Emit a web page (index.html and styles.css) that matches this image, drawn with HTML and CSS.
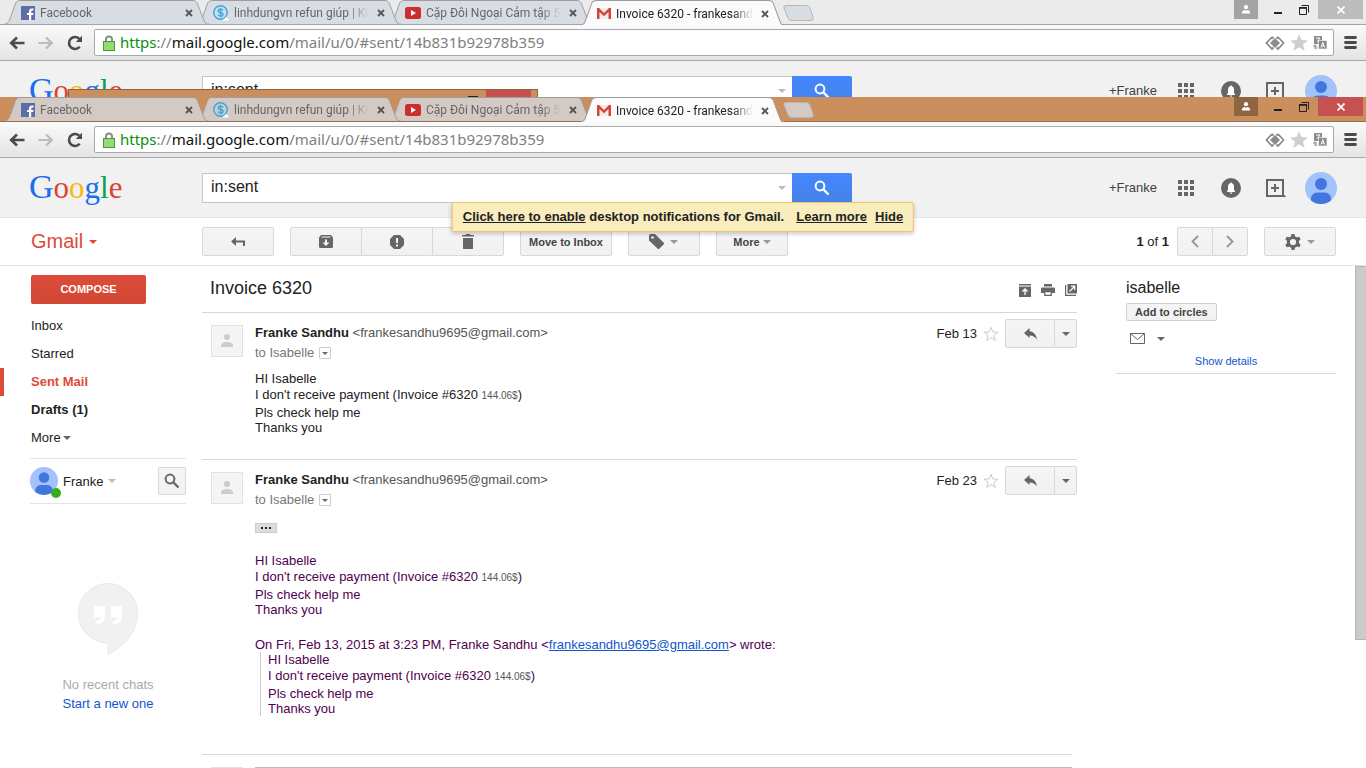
FILE: index.html
```
<!DOCTYPE html>
<html lang="en">
<head>
    <meta charset="UTF-8">
    <title>Invoice 6320 - frankesandhu9695@gmail.com - Gmail</title>
    <link rel="stylesheet" href="styles.css">
</head>
<body>
    <!-- icons -->
    <svg class="defs" width="0" height="0">
        <symbol id="tab-shape" viewBox="0 0 204 24" preserveAspectRatio="none">
            <path d="M0 24 C4 23 4 21 6 16 L10 5 C11 2 12 .5 16 .5 H187 C191 .5 192 2 193 5 L198 18 C200 23 200 24 204 24"/>
        </symbol>
        <symbol id="newtab-shape" viewBox="0 0 32 16">
            <path d="M4 .5 H24 Q27 .5 28 3 L31 12 Q32 15 29 15.500 H10 Q7 15.500 6 13 L2 3 Q1 .5 4 .5 Z"/>
        </symbol>
        <symbol id="i-close" viewBox="0 0 8 8"><path d="M1 1 L7 7 M7 1 L1 7" fill="none" stroke="#555" stroke-width="1.8"/></symbol>
        <symbol id="i-facebook" viewBox="0 0 14 14">
            <rect width="14" height="14" fill="#5c6ea6"/>
            <path d="M8 14 V9 H6 V7 H8 V5.500 Q8 2.500 11 2.500 H12.500 V4.500 H11.500 Q10.200 4.500 10.200 5.800 V7 H12.500 L12.200 9 H10.200 V14 Z" fill="#fff"/>
        </symbol>
        <symbol id="i-dollar" viewBox="0 0 16 16">
            <circle cx="7.500" cy="7.500" r="6.700" fill="none" stroke="#35abe2" stroke-width="1.500"/>
            <path d="M10 5.500 Q9.500 4.200 7.500 4.200 Q5.200 4.200 5.200 5.900 Q5.200 7.200 7.500 7.500 Q10 7.900 10 9.400 Q10 11 7.500 11 Q5.200 11 5 9.500 M7.500 2.800 V12.300" fill="none" stroke="#35abe2" stroke-width="1.400"/>
            <path d="M10 15.500 Q10 13 12 13.500 Q13 11 14.500 13 Q16 13.500 15.500 15.500 Z" fill="#fff"/>
        </symbol>
        <symbol id="i-youtube" viewBox="0 0 16 12">
            <rect width="16" height="12" rx="2.500" fill="#c9302c"/>
            <path d="M6 3 L11 6 L6 9 Z" fill="#fff"/>
        </symbol>
        <symbol id="i-gmail" viewBox="0 0 14 11">
            <path d="M0 0 H14 V11 H0 Z" fill="#eee"/>
            <path d="M0 11 V0 H2 L7 5 L12 0 H14 V11 H11.500 V4 L7 8.300 L2.500 4 V11 Z" fill="#d94335"/>
        </symbol>
        <symbol id="i-back" viewBox="0 0 16 14"><path d="M15.500 7 H3 M8 1.500 L2.200 7 L8 12.500" fill="none" stroke="currentColor" stroke-width="2.600"/></symbol>
        <symbol id="i-forward" viewBox="0 0 16 14"><path d="M.5 7 H13 M8 1.500 L13.800 7 L8 12.500" fill="none" stroke="currentColor" stroke-width="2.200"/></symbol>
        <symbol id="i-reload" viewBox="0 0 16 16">
            <path d="M12.700 11.800 A6 6 0 1 1 12.300 3.800" fill="none" stroke="#4a4a4a" stroke-width="2.600"/>
            <path d="M15 .8 V7 H8.800 Z" fill="#4a4a4a"/>
        </symbol>
        <symbol id="i-lock" viewBox="0 0 12 16">
            <path d="M3 8 V4.500 Q3 1.500 6 1.500 Q9 1.500 9 4.500 V8" fill="none" stroke="#8c8c8c" stroke-width="2"/>
            <rect x=".5" y="6.500" width="11" height="9" fill="#92dd73" stroke="#4f9636"/>
        </symbol>
        <symbol id="i-diamond" viewBox="0 0 20 16">
            <path d="M7 2 L1.500 8 L7 14 L8.500 12.500 M13 2 L18.500 8 L13 14 L11.500 12.500 M7 2 L8.500 3.500 M13 2 L11.500 3.500" fill="none" stroke="#8b8b8b" stroke-width="1.800"/>
            <path d="M10 3 L15 8 L10 13 L5 8 Z" fill="#8b8b8b"/>
        </symbol>
        <symbol id="i-bookmark" viewBox="0 0 18 17"><path d="M9 0 L11.400 6 L18 6.400 L13 10.500 L14.700 17 L9 13.300 L3.300 17 L5 10.500 L0 6.400 L6.600 6 Z" fill="#cfcfcf"/></symbol>
        <symbol id="i-translate" viewBox="0 0 14 15">
            <rect x="1" y="1" width="8" height="8" fill="#8b8b8b"/>
            <path d="M3 3 H7 M7 3 L4 7" stroke="#fff" fill="none"/>
            <rect x="5.500" y="5.500" width="8.500" height="8.500" fill="#8b8b8b" stroke="#fff" stroke-width=".6"/>
            <path d="M8 12.500 L9.800 7.500 L11.600 12.500 M8.500 11 H11" stroke="#fff" fill="none"/>
            <path d="M0 11 H4 M2 9.500 V14 M2 13 H4.500" stroke="#8b8b8b" fill="none"/>
        </symbol>
        <symbol id="i-menu" viewBox="0 0 13 13"><path d="M1.500 1.500 H11.500 M1.500 6.500 H11.500 M1.500 11.500 H11.500" stroke="#4a4a4a" stroke-width="2.800" stroke-linecap="round"/></symbol>
        <symbol id="i-user" viewBox="0 0 8 9"><circle cx="4" cy="2.200" r="2.100" fill="#fff"/><path d="M0 8.500 V7 Q.5 5 3 5 L4 6 L5 5 Q7.500 5 8 7 V8.500 Z" fill="#fff"/></symbol>
        <symbol id="i-min" viewBox="0 0 8 12"><rect y="8" width="8" height="2" fill="#222"/></symbol>
        <symbol id="i-restore" viewBox="0 0 10 10"><path d="M.5 3 H7.500 V9.500 H.5 Z M2.500 .5 H9.500 V7.500" fill="none" stroke="#222"/><path d="M0 2.800 H8" stroke="#222" stroke-width="1.600"/></symbol>
        <symbol id="i-winclose" viewBox="0 0 8 8"><path d="M.5 .5 L7.500 7.500 M7.500 .5 L.5 7.500" stroke="#fff" stroke-width="1.700"/></symbol>
        <symbol id="i-search" viewBox="0 0 16 16"><circle cx="6" cy="6" r="4.400" fill="none" stroke="currentColor" stroke-width="2"/><path d="M9.500 9.500 L14.500 14.500" stroke="currentColor" stroke-width="2.400"/></symbol>
        <symbol id="i-apps" viewBox="0 0 16 16"><path d="M0 0h4v4H0zM6 0h4v4H6zM12 0h4v4h-4zM0 6h4v4H0zM6 6h4v4H6zM12 6h4v4h-4zM0 12h4v4H0zM6 12h4v4H6zM12 12h4v4h-4z" fill="#666"/></symbol>
        <symbol id="i-bell" viewBox="0 0 20 20"><circle cx="10" cy="10" r="10" fill="#666"/><path d="M6 14 V13 L7 12 V8.500 Q7 5.500 9.300 5 V4.500 H10.700 V5 Q13 5.500 13 8.500 V12 L14 13 V14 Z M8.500 14.500 H11.500 L10 16 Z" fill="#fff"/></symbol>
        <symbol id="i-share" viewBox="0 0 20 18"><path d="M1 1 H17 V17 H1 Z" fill="none" stroke="#666" stroke-width="2"/><path d="M16 14 L20.500 18 H16 Z" fill="#666"/><path d="M9 5 V13 M5 9 H13" stroke="#666" stroke-width="2"/></symbol>
        <symbol id="i-avatar" viewBox="0 0 32 32"><circle cx="16" cy="16" r="16" fill="#a1c2fa"/><circle cx="16" cy="12" r="6" fill="#4175df"/><path d="M6 28.500 V26 Q7 20.500 13 20.500 H19 Q25 20.500 26 26 V28.500 Q21.500 32 16 32 Q10.500 32 6 28.500 Z" fill="#4175df"/></symbol>
        <symbol id="i-person" viewBox="0 0 12 14"><circle cx="6" cy="3" r="3" fill="#ccc"/><path d="M0 13 V11 Q1 8 6 8 Q11 8 12 11 V13 Z" fill="#ccc"/></symbol>
        <symbol id="i-reply-all" viewBox="0 0 14 10"><path d="M5 0 V3.500 H14 V9 H12 V5.500 H5 V9 L0 4.500 Z" fill="#666"/></symbol>
        <symbol id="i-archive" viewBox="0 0 14 13"><path d="M2 0 H12 L14 2.500 V11.500 Q14 13 12.500 13 H1.500 Q0 13 0 11.500 V2.500 Z" fill="#666"/><path d="M2.500 2 H11.500" stroke="#f3f3f3"/><path d="M6 4.500 H8 V7.500 H10.500 L7 11 L3.500 7.500 H6 Z" fill="#f3f3f3"/></symbol>
        <symbol id="i-spam" viewBox="0 0 14 14"><path d="M4 0 H10 L14 4 V10 L10 14 H4 L0 10 V4 Z" fill="#666"/><path d="M6 3 H8 V8 H6 Z M6 9.500 H8 V11.500 H6 Z" fill="#f3f3f3"/></symbol>
        <symbol id="i-trash" viewBox="0 0 12 15"><path d="M0 1 H3.500 L4 0 H8 L8.500 1 H12 V2.500 H0 Z M1 4 H11 V15 H1 Z" fill="#666"/></symbol>
        <symbol id="i-label" viewBox="0 0 15 15"><path d="M0 1.500 Q0 0 1.500 0 H6 L15 9 Q15.500 9.500 15 10 L10 15 Q9.500 15.500 9 15 L0 6.500 Z" fill="#666"/><circle cx="3.500" cy="3.500" r="1.300" fill="#f3f3f3"/></symbol>
        <symbol id="i-prev" viewBox="0 0 8 13"><path d="M7 1 L1.500 6.500 L7 12" fill="none" stroke="#999" stroke-width="2"/></symbol>
        <symbol id="i-next" viewBox="0 0 8 13"><path d="M1 1 L6.500 6.500 L1 12" fill="none" stroke="#999" stroke-width="2"/></symbol>
        <symbol id="i-gear" viewBox="0 0 16 16"><circle cx="8" cy="8" r="4.600" fill="none" stroke="#666" stroke-width="3"/><path d="M6.500 0 H9.500 L10.200 3 H5.800 Z M6.500 16 H9.500 L10.200 13 H5.800 Z M.3 5.300 L1.800 2.700 L4.800 3.600 L2.600 7.400 Z M15.700 5.300 L14.200 2.700 L11.200 3.600 L13.400 7.400 Z M.3 10.700 L1.800 13.300 L4.800 12.400 L2.600 8.600 Z M15.700 10.700 L14.200 13.300 L11.200 12.400 L13.400 8.600 Z" fill="#666"/></symbol>
        <symbol id="i-expand" viewBox="0 0 12 13"><path d="M0 0 H12 V1.500 H0 Z M0 2.500 H12 V13 H0 Z" fill="#666"/><path d="M6 11 V6 M3.500 7.500 L6 5 L8.500 7.500" fill="none" stroke="#fff" stroke-width="1.300"/></symbol>
        <symbol id="i-print" viewBox="0 0 14 12"><path d="M3 0 H11 V2.500 H3 Z M1 3.500 H13 Q14 3.500 14 5 V9 H11 V7 H3 V9 H0 V5 Q0 3.500 1 3.500 Z" fill="#666"/><path d="M3.700 7.700 H10.300 V11.300 H3.700 Z" fill="#fff" stroke="#666" stroke-width="1.300"/></symbol>
        <symbol id="i-popout" viewBox="0 0 12 12"><path d="M2.500 0 H12 V9.500 H2.500 Z" fill="#666"/><path d="M.6 1 V11.400 H11" fill="none" stroke="#666" stroke-width="1.200"/><path d="M4.500 7.500 L9.500 2.500 M6 2.200 H9.700 V6" fill="none" stroke="#fff" stroke-width="1.200"/></symbol>
        <symbol id="i-star" viewBox="0 0 16 16"><path d="M8 1.300 L9.800 6 L14.900 6.200 L10.900 9.400 L12.400 14.500 L8 11.500 L3.600 14.500 L5.100 9.400 L1.100 6.200 L6.200 6 Z" fill="#fff" stroke="#ccc"/></symbol>
        <symbol id="i-reply" viewBox="0 0 13 12"><path d="M0 5 L5.500 0 V3 Q12 4 13 11.500 Q10 7.500 5.500 7.500 V10 Z" fill="#666"/></symbol>
        <symbol id="i-mail" viewBox="0 0 15 11"><path d="M.5 .5 H14.500 V10.500 H.5 Z M.5 .5 L7.500 6.500 L14.500 .5" fill="none" stroke="#666"/></symbol>
        <symbol id="i-hangouts" viewBox="0 0 60 72">
            <path d="M30 .5 A29.500 29.500 0 0 0 30 60 V71.500 Q59.500 56 59.500 30 A29.500 29.500 0 0 0 30 .5 Z" fill="#f1f1f1" stroke="#e9e9e9"/>
            <path d="M17 23 H26 Q27 23 27 24 V33 Q27 41 18 41 V38 Q22 38 23 34.500 H17 Q16 34.500 16 33.500 V24 Q16 23 17 23 Z M34 23 H43 Q44 23 44 24 V33 Q44 41 35 41 V38 Q39 38 40 34.500 H34 Q33 34.500 33 33.500 V24 Q33 23 34 23 Z" fill="#fff"/>
        </symbol>
    </svg>

    <!-- window behind -->
    <div class="window back">
        <div class="tabstrip">
            <div class="tab">
                <svg class="shape"><use href="#tab-shape"/></svg>
                <svg class="favicon" width="14" height="14"><use href="#i-facebook"/></svg>
                <span class="tab-title">Facebook</span>
                <button class="tab-close" aria-label="Close tab"><svg width="8" height="8"><use href="#i-close"/></svg></button>
            </div>
            <div class="tab">
                <svg class="shape"><use href="#tab-shape"/></svg>
                <svg class="favicon" width="16" height="16"><use href="#i-dollar"/></svg>
                <span class="tab-title">linhdungvn refun giúp | Ki</span>
                <button class="tab-close" aria-label="Close tab"><svg width="8" height="8"><use href="#i-close"/></svg></button>
            </div>
            <div class="tab">
                <svg class="shape"><use href="#tab-shape"/></svg>
                <svg class="favicon" width="16" height="12"><use href="#i-youtube"/></svg>
                <span class="tab-title">Cặp Đôi Ngoại Cảm tập 5</span>
                <button class="tab-close" aria-label="Close tab"><svg width="8" height="8"><use href="#i-close"/></svg></button>
            </div>
            <div class="tab active">
                <svg class="shape"><use href="#tab-shape"/></svg>
                <svg class="favicon" width="14" height="11"><use href="#i-gmail"/></svg>
                <span class="tab-title">Invoice 6320 - frankesand</span>
                <button class="tab-close" aria-label="Close tab"><svg width="8" height="8"><use href="#i-close"/></svg></button>
            </div>
            <button class="newtab" aria-label="New tab"><svg width="32" height="16"><use href="#newtab-shape"/></svg></button>
            <div class="controls">
                <button class="c-user" aria-label="User"><svg width="8" height="9"><use href="#i-user"/></svg></button>
                <button class="c-min" aria-label="Minimize"><svg width="8" height="12"><use href="#i-min"/></svg></button>
                <button class="c-max" aria-label="Restore"><svg width="10" height="10"><use href="#i-restore"/></svg></button>
                <button class="c-close" aria-label="Close"><svg width="8" height="8"><use href="#i-winclose"/></svg></button>
            </div>
        </div>
        <div class="navbar">
            <button class="nav-btn" aria-label="Back"><svg width="16" height="14"><use href="#i-back"/></svg></button>
            <button class="nav-btn off" aria-label="Forward"><svg width="16" height="14"><use href="#i-forward"/></svg></button>
            <button class="nav-btn" aria-label="Reload"><svg width="16" height="16"><use href="#i-reload"/></svg></button>
            <div class="omnibox">
                <svg width="12" height="16"><use href="#i-lock"/></svg>
                <div class="url"><span class="scheme">https</span>://<span class="host">mail.google.com</span>/mail/u/0/#sent/14b831b92978b359</div>
                <svg width="20" height="16"><use href="#i-diamond"/></svg>
                <svg width="18" height="17"><use href="#i-bookmark"/></svg>
                <svg width="14" height="15"><use href="#i-translate"/></svg>
            </div>
            <button class="nav-btn menu" aria-label="Menu"><svg width="13" height="13"><use href="#i-menu"/></svg></button>
        </div>
        <header class="gbar">
            <a class="logo" href="#"><span class="cap b">G</span><span class="r">o</span><span class="y">o</span><span class="b">g</span><span class="g">l</span><span class="r">e</span></a>
            <form class="search">
                <input type="text" value="in:sent" aria-label="Search">
                <i class="caret light"></i>
                <button type="button" aria-label="Search"><svg width="16" height="16"><use href="#i-search"/></svg></button>
            </form>
            <div class="account">
                <a class="plus" href="#">+Franke</a>
                <a href="#" aria-label="Apps"><svg width="16" height="16"><use href="#i-apps"/></svg></a>
                <a href="#" aria-label="Notifications"><svg width="20" height="20"><use href="#i-bell"/></svg></a>
                <a href="#" aria-label="Share"><svg width="20" height="18"><use href="#i-share"/></svg></a>
                <a href="#" aria-label="Account"><svg width="32" height="32"><use href="#i-avatar"/></svg></a>
            </div>
        </header>
        <div class="peek"><span class="peek-min"></span><span class="peek-close"></span></div>
    </div>

    <!-- front window -->
    <div class="window front">
        <div class="tabstrip">
            <div class="tab">
                <svg class="shape"><use href="#tab-shape"/></svg>
                <svg class="favicon" width="14" height="14"><use href="#i-facebook"/></svg>
                <span class="tab-title">Facebook</span>
                <button class="tab-close" aria-label="Close tab"><svg width="8" height="8"><use href="#i-close"/></svg></button>
            </div>
            <div class="tab">
                <svg class="shape"><use href="#tab-shape"/></svg>
                <svg class="favicon" width="16" height="16"><use href="#i-dollar"/></svg>
                <span class="tab-title">linhdungvn refun giúp | Ki</span>
                <button class="tab-close" aria-label="Close tab"><svg width="8" height="8"><use href="#i-close"/></svg></button>
            </div>
            <div class="tab">
                <svg class="shape"><use href="#tab-shape"/></svg>
                <svg class="favicon" width="16" height="12"><use href="#i-youtube"/></svg>
                <span class="tab-title">Cặp Đôi Ngoại Cảm tập 5</span>
                <button class="tab-close" aria-label="Close tab"><svg width="8" height="8"><use href="#i-close"/></svg></button>
            </div>
            <div class="tab active">
                <svg class="shape"><use href="#tab-shape"/></svg>
                <svg class="favicon" width="14" height="11"><use href="#i-gmail"/></svg>
                <span class="tab-title">Invoice 6320 - frankesand</span>
                <button class="tab-close" aria-label="Close tab"><svg width="8" height="8"><use href="#i-close"/></svg></button>
            </div>
            <button class="newtab" aria-label="New tab"><svg width="32" height="16"><use href="#newtab-shape"/></svg></button>
            <div class="controls">
                <button class="c-user" aria-label="User"><svg width="8" height="9"><use href="#i-user"/></svg></button>
                <button class="c-min" aria-label="Minimize"><svg width="8" height="12"><use href="#i-min"/></svg></button>
                <button class="c-max" aria-label="Restore"><svg width="10" height="10"><use href="#i-restore"/></svg></button>
                <button class="c-close" aria-label="Close"><svg width="8" height="8"><use href="#i-winclose"/></svg></button>
            </div>
        </div>
        <div class="navbar">
            <button class="nav-btn" aria-label="Back"><svg width="16" height="14"><use href="#i-back"/></svg></button>
            <button class="nav-btn off" aria-label="Forward"><svg width="16" height="14"><use href="#i-forward"/></svg></button>
            <button class="nav-btn" aria-label="Reload"><svg width="16" height="16"><use href="#i-reload"/></svg></button>
            <div class="omnibox">
                <svg width="12" height="16"><use href="#i-lock"/></svg>
                <div class="url"><span class="scheme">https</span>://<span class="host">mail.google.com</span>/mail/u/0/#sent/14b831b92978b359</div>
                <svg width="20" height="16"><use href="#i-diamond"/></svg>
                <svg width="18" height="17"><use href="#i-bookmark"/></svg>
                <svg width="14" height="15"><use href="#i-translate"/></svg>
            </div>
            <button class="nav-btn menu" aria-label="Menu"><svg width="13" height="13"><use href="#i-menu"/></svg></button>
        </div>
        <header class="gbar">
            <a class="logo" href="#"><span class="cap b">G</span><span class="r">o</span><span class="y">o</span><span class="b">g</span><span class="g">l</span><span class="r">e</span></a>
            <form class="search">
                <input type="text" value="in:sent" aria-label="Search mail">
                <i class="caret light"></i>
                <button type="button" aria-label="Search mail"><svg width="16" height="16"><use href="#i-search"/></svg></button>
            </form>
            <div class="account">
                <a class="plus" href="#">+Franke</a>
                <a href="#" aria-label="Apps"><svg width="16" height="16"><use href="#i-apps"/></svg></a>
                <a href="#" aria-label="Notifications"><svg width="20" height="20"><use href="#i-bell"/></svg></a>
                <a href="#" aria-label="Share"><svg width="20" height="18"><use href="#i-share"/></svg></a>
                <a href="#" aria-label="Account"><svg width="32" height="32"><use href="#i-avatar"/></svg></a>
            </div>
            <div class="notice"><span><a href="#">Click here to enable</a> desktop notifications for Gmail.</span><a href="#">Learn more</a><a href="#">Hide</a></div>
        </header>

        <div class="actions">
            <a class="gmail" href="#">Gmail <i class="caret red"></i></a>
            <button class="btn wide" aria-label="Back to list"><svg width="14" height="10"><use href="#i-reply-all"/></svg></button>
            <div class="group">
                <button class="btn wide" aria-label="Archive"><svg width="14" height="13"><use href="#i-archive"/></svg></button>
                <button class="btn wide" aria-label="Report spam"><svg width="14" height="14"><use href="#i-spam"/></svg></button>
                <button class="btn wide" aria-label="Delete"><svg width="12" height="15"><use href="#i-trash"/></svg></button>
            </div>
            <button class="btn">Move to Inbox</button>
            <button class="btn wide" aria-label="Labels"><svg width="15" height="15"><use href="#i-label"/></svg><i class="caret"></i></button>
            <button class="btn wide more">More<i class="caret"></i></button>
            <span class="count"><b>1</b> of <b>1</b></span>
            <div class="group">
                <button class="btn page" aria-label="Newer"><svg width="8" height="13"><use href="#i-prev"/></svg></button>
                <button class="btn page" aria-label="Older"><svg width="8" height="13"><use href="#i-next"/></svg></button>
            </div>
            <button class="btn wide" aria-label="Settings"><svg width="16" height="16"><use href="#i-gear"/></svg><i class="caret"></i></button>
        </div>

        <div class="main">
            <aside class="sidebar">
                <button class="compose">COMPOSE</button>
                <nav>
                    <a href="#">Inbox</a>
                    <a href="#">Starred</a>
                    <a class="current" href="#">Sent Mail</a>
                    <a class="bold" href="#">Drafts (1)</a>
                    <a href="#">More <i class="caret dark"></i></a>
                </nav>
                <div class="chat-user">
                    <span class="chat-avatar"><svg width="28" height="28"><use href="#i-avatar"/></svg><i class="online"></i></span>
                    <span class="chat-name">Franke</span>
                    <i class="caret light"></i>
                    <button class="btn small" aria-label="Search people"><svg width="16" height="16"><use href="#i-search"/></svg></button>
                </div>
                <div class="chats">
                    <svg width="60" height="72"><use href="#i-hangouts"/></svg>
                    <p>No recent chats</p>
                    <a href="#">Start a new one</a>
                </div>
            </aside>

            <section class="thread">
                <div class="subject">
                    <h1>Invoice 6320</h1>
                    <svg width="12" height="13"><use href="#i-expand"/></svg>
                    <svg width="14" height="12"><use href="#i-print"/></svg>
                    <svg width="12" height="12"><use href="#i-popout"/></svg>
                </div>

                <article class="message">
                    <div class="photo"><svg width="12" height="14"><use href="#i-person"/></svg></div>
                    <div class="content">
                        <div class="from"><b>Franke Sandhu</b> <span>&lt;frankesandhu9695@gmail.com&gt;</span></div>
                        <div class="to">to Isabelle <button aria-label="Show details"><i class="caret dark"></i></button></div>
                        <div class="text">
                            <p>HI Isabelle</p>
                            <p class="tall">I don't receive payment (Invoice #6320 <small>144.06$</small>)</p>
                            <p>Pls check help me</p>
                            <p>Thanks you</p>
                        </div>
                    </div>
                    <div class="meta">
                        <span>Feb 13</span>
                        <svg width="16" height="16"><use href="#i-star"/></svg>
                        <div class="group">
                            <button class="btn reply" aria-label="Reply"><svg width="13" height="12"><use href="#i-reply"/></svg></button>
                            <button class="btn drop" aria-label="More"><i class="caret dark"></i></button>
                        </div>
                    </div>
                </article>

                <article class="message last">
                    <div class="photo"><svg width="12" height="14"><use href="#i-person"/></svg></div>
                    <div class="content">
                        <div class="from"><b>Franke Sandhu</b> <span>&lt;frankesandhu9695@gmail.com&gt;</span></div>
                        <div class="to">to Isabelle <button aria-label="Show details"><i class="caret dark"></i></button></div>
                        <button class="trimmed" aria-label="Hide expanded content"><i></i><i></i><i></i></button>
                        <div class="text quoted">
                            <p>HI Isabelle</p>
                            <p class="tall">I don't receive payment (Invoice #6320 <small>144.06$</small>)</p>
                            <p>Pls check help me</p>
                            <p>Thanks you</p>
                            <p class="wrote">On Fri, Feb 13, 2015 at 3:23 PM, Franke Sandhu &lt;<a href="#">frankesandhu9695@gmail.com</a>&gt; wrote:</p>
                            <blockquote>
                                <p>HI Isabelle</p>
                                <p class="tall">I don't receive payment (Invoice #6320 <small>144.06$</small>)</p>
                                <p>Pls check help me</p>
                                <p>Thanks you</p>
                            </blockquote>
                        </div>
                    </div>
                    <div class="meta">
                        <span>Feb 23</span>
                        <svg width="16" height="16"><use href="#i-star"/></svg>
                        <div class="group">
                            <button class="btn reply" aria-label="Reply"><svg width="13" height="12"><use href="#i-reply"/></svg></button>
                            <button class="btn drop" aria-label="More"><i class="caret dark"></i></button>
                        </div>
                    </div>
                </article>

                <div class="answer">
                    <div class="photo"></div>
                    <textarea aria-label="Reply"></textarea>
                </div>
            </section>

            <aside class="contact">
                <h2>isabelle</h2>
                <button class="circles">Add to circles</button>
                <div class="contact-icons"><svg width="15" height="11"><use href="#i-mail"/></svg><i class="caret dark"></i></div>
                <a href="#">Show details</a>
            </aside>
            <div class="scrollbar"><div class="thumb"></div></div>
        </div>
    </div>
</body>
</html>
```

FILE: styles.css
```
* {
    box-sizing: border-box;
}
body {
    margin: 0;
    height: 100vh;
    display: flex;
    flex-direction: column;
    overflow: hidden;
    background: #fff;
    color: #222;
    font-family: "Liberation Sans", Arial, sans-serif;
    font-size: 13px;
}
.defs {
    position: absolute;
}
svg {
    display: block;
    flex: none;
    overflow: visible;
}
button {
    margin: 0;
    padding: 0;
    border: 0;
    background: none;
    font-family: inherit;
    color: inherit;
}
a {
    color: inherit;
    text-decoration: none;
}
p, h1, h2 {
    margin: 0;
    font-weight: normal;
}

/* windows */
.window {
    position: relative;
    display: flex;
    flex-direction: column;
}
.back {
    --strip: #ebebeb;
    --tab: #d8dde4;
    --edge: #a5a5a5;
    --user: #a3a3a3;
    --close: #bcbcbc;
    flex: 0 0 97px;
    overflow: hidden;
}
.front {
    --strip: #cb8f5d;
    --tab: #d3cac5;
    --edge: #96704f;
    --user: #8e6441;
    --close: #c75050;
    flex: 1;
    min-height: 0;
}

/* tabs */
.tabstrip {
    flex: none;
    display: flex;
    height: 25px;
    padding-left: 5px;
    background: var(--strip);
    border-bottom: 1px solid var(--edge);
}
.tab {
    position: relative;
    z-index: 1;
    display: flex;
    align-items: center;
    width: 204px;
    height: 24px;
    margin-right: -12px;
    padding: 2px 16px 0;
    font-family: Roboto, "Open Sans", sans-serif;
    font-size: 12px;
    color: #666;
}
.tab:nth-child(1) {
    z-index: 3;
}
.tab:nth-child(2) {
    z-index: 2;
}
.tab .shape {
    position: absolute;
    left: 0;
    top: 0;
    z-index: -1;
    width: 100%;
    height: 24px;
    fill: var(--tab);
    stroke: #a09c99;
}
.tab.active {
    z-index: 4;
    height: 25px;
    color: #222;
}
.tab.active .shape {
    height: 25px;
    fill: #fbfbfb;
}
.tab-title {
    flex: 1;
    margin: 0 8px 0 5px;
    overflow: hidden;
    white-space: nowrap;
    -webkit-mask-image: linear-gradient(90deg, #000 85%, transparent);
    mask-image: linear-gradient(90deg, #000 85%, transparent);
}
.newtab {
    align-self: flex-start;
    margin: 5px 0 0 9px;
    fill: var(--tab);
    stroke: #b9b5b1;
}
.controls {
    display: flex;
    height: 19px;
    margin: 0 3px 0 auto;
}
.controls button {
    display: flex;
    align-items: center;
    justify-content: center;
}
.controls .c-user {
    width: 24px;
    background: var(--user);
}
.c-min {
    width: 40px;
}
.c-max {
    width: 12px;
    margin-right: 8px;
}
.controls .c-close {
    width: 45px;
    background: var(--close);
}

/* address bar */
.navbar {
    flex: none;
    display: flex;
    align-items: center;
    gap: 10px;
    height: 36px;
    padding: 0 9px 0 7px;
    background: linear-gradient(#fafafa, #e4e4e4);
    border-bottom: 1px solid #a9a9a9;
}
.nav-btn {
    display: flex;
    justify-content: center;
    width: 19px;
    color: #4a4a4a;
}
.nav-btn.off {
    color: #bbb;
}
.nav-btn.menu {
    width: 13px;
}
.omnibox {
    flex: 1;
    display: flex;
    align-items: center;
    gap: 5px;
    height: 27px;
    padding: 0 6px 0 8px;
    background: #fff;
    border: 1px solid #aaa;
    border-radius: 2px;
}
.url {
    flex: 1;
    padding-bottom: 2px;
    font-family: "Noto Sans", "Open Sans", sans-serif;
    font-size: 15px;
    line-height: 20px;
    color: #808080;
    white-space: nowrap;
}
.scheme {
    color: #0b8f0b;
}
.host {
    color: #111;
}

/* top of the window hidden in the middle */
.peek {
    position: absolute;
    left: 68px;
    bottom: 0;
    display: flex;
    justify-content: flex-end;
    width: 470px;
    height: 8px;
    padding-right: 6px;
    background: #cb8f5d;
    border: 1px solid #8f6440;
    border-bottom: 0;
}
.peek-min {
    align-self: flex-end;
    width: 10px;
    height: 1px;
    margin-right: 8px;
    background: #222;
}
.peek-close {
    width: 45px;
    background: #c75050;
}

/* google bar */
.gbar {
    position: relative;
    flex: none;
    display: flex;
    align-items: center;
    height: 60px;
    padding-right: 29px;
    background: #f1f1f1;
    border-bottom: 1px solid #e5e5e5;
}
.logo {
    width: 202px;
    padding-left: 29px;
    font-family: "Liberation Serif", "Times New Roman", serif;
    font-size: 31px;
    line-height: 40px;
}
.cap {
    font-size: 34px;
}
.b { color: #1a6cf0; }
.r { color: #db4432; }
.y { color: #fcb70b; }
.g { color: #0aa05c; }
.search {
    position: relative;
    flex: 0 1 650px;
    display: flex;
    height: 30px;
}
.search input {
    flex: 1;
    min-width: 0;
    padding: 0 8px 2px;
    background: #fff;
    border: 1px solid #c6c6c6;
    border-right: 0;
    font-family: inherit;
    font-size: 16px;
    color: #222;
}
.search .caret {
    position: absolute;
    right: 66px;
    top: 13px;
}
.search button {
    display: flex;
    align-items: center;
    justify-content: center;
    width: 60px;
    background: linear-gradient(#4387fd, #4683ea);
    border-radius: 0 2px 2px 0;
    color: #fff;
}
.account {
    display: flex;
    align-items: center;
    gap: 13px;
    margin-left: auto;
    color: #404040;
}
.account a {
    display: flex;
    justify-content: center;
    min-width: 32px;
}
.notice {
    position: absolute;
    top: 44px;
    left: 50%;
    z-index: 5;
    transform: translateX(-50%);
    display: flex;
    padding: 0 10px;
    background: #f9edbe;
    border: 1px solid #f0c36d;
    border-radius: 2px;
    box-shadow: 0 2px 4px rgba(0, 0, 0, .2);
    font-weight: bold;
    line-height: 28px;
    white-space: nowrap;
}
.notice a {
    text-decoration: underline;
}
.notice > a {
    margin-left: 8px;
}
.notice span + a {
    margin-left: 12px;
}

/* buttons */
.caret {
    display: inline-block;
    border: 4px solid transparent;
    border-top-color: #999;
    border-bottom: 0;
}
.caret.light { border-top-color: #bbb; }
.caret.dark { border-top-color: #666; }
.caret.red { border-top-color: #dd4b39; }
.btn {
    display: flex;
    align-items: center;
    justify-content: center;
    gap: 6px;
    height: 29px;
    padding: 0 8px;
    background: linear-gradient(#f5f5f5, #f1f1f1);
    border: 1px solid #d8d8d8;
    border-radius: 2px;
    font-size: 11px;
    font-weight: bold;
    color: #444;
    white-space: nowrap;
}
.wide {
    width: 72px;
}
.more {
    gap: 3px;
}
.group {
    display: flex;
}
.group .btn + .btn {
    margin-left: -1px;
    border-radius: 0 2px 2px 0;
}
.page {
    width: 36px;
}
.small {
    width: 28px;
    height: 28px;
    padding: 0;
}

/* action row */
.actions {
    flex: none;
    display: flex;
    align-items: center;
    gap: 16px;
    height: 48px;
    padding-right: 30px;
    border-bottom: 1px solid #e5e5e5;
}
.gmail {
    display: flex;
    align-items: center;
    gap: 6px;
    width: 186px;
    padding-left: 31px;
    font-size: 20px;
    color: #dd4b39;
}
.count {
    margin: 0 -8px 0 auto;
}

/* main */
.main {
    flex: 1;
    min-height: 0;
    display: flex;
    overflow: hidden;
}
.sidebar {
    flex: 0 0 202px;
    padding-top: 9px;
}
.compose {
    width: 115px;
    height: 29px;
    margin-left: 31px;
    padding-bottom: 1px;
    background: linear-gradient(#dd4b39, #d14836);
    border-radius: 2px;
    font-size: 11px;
    font-weight: bold;
    color: #fff;
}
nav {
    display: flex;
    flex-direction: column;
    margin: 8px 0 6px;
}
nav a {
    padding-left: 31px;
    line-height: 28px;
}
nav .caret {
    margin: 0 0 2px -1px;
}
nav .current {
    padding-left: 27px;
    border-left: 4px solid #dd4b39;
    font-weight: bold;
    color: #dd4b39;
}
.bold {
    font-weight: bold;
}
.chat-user {
    display: flex;
    align-items: center;
    gap: 5px;
    height: 46px;
    margin: 0 16px 0 30px;
    border: solid #e5e5e5;
    border-width: 1px 0;
}
.chat-user .btn {
    margin-left: auto;
    color: #666;
}
.chat-avatar {
    position: relative;
}
.online {
    position: absolute;
    right: -3px;
    bottom: -3px;
    width: 10px;
    height: 10px;
    border-radius: 50%;
    background: #38ab1e;
}
.chats {
    display: flex;
    flex-direction: column;
    align-items: center;
    margin: 79px 16px 0 30px;
    line-height: 19px;
}
.chats p {
    margin-top: 20px;
    color: #aaa;
}
.chats a, .contact a {
    color: #15c;
}

/* thread */
.thread {
    flex: 1;
    min-width: 0;
    margin-right: 39px;
}
.subject {
    display: flex;
    align-items: center;
    gap: 10px;
    height: 47px;
    padding: 2px 0 0 8px;
    border-bottom: 1px solid #d8d8d8;
}
.subject h1 {
    flex: 1;
    font-size: 18px;
    line-height: 24px;
    padding-bottom: 4px;
}
.message {
    display: flex;
    align-items: flex-start;
    height: 147px;
    padding-left: 9px;
    border-bottom: 1px solid #d8d8d8;
}
.message.last {
    height: 295px;
    margin-right: 5px;
}
.last .meta {
    margin-right: -5px;
}
.photo {
    flex: none;
    display: flex;
    align-items: center;
    justify-content: center;
    width: 32px;
    height: 32px;
    margin: 12px 12px 0 0;
    background: #f5f5f5;
    border: 1px solid #e2e2e2;
}
.content {
    flex: 1;
    min-width: 0;
    padding-top: 10px;
    line-height: 20px;
}
.from span {
    color: #555;
}
.to {
    display: flex;
    align-items: center;
    gap: 5px;
    color: #777;
}
.to button {
    display: flex;
    align-items: center;
    justify-content: center;
    width: 12px;
    height: 12px;
    border: 1px solid #ccc;
    border-radius: 1px;
}
.to .caret {
    border-width: 3px 3px 0;
}
.text {
    margin-top: 8px;
    line-height: 15px;
}
.text .tall {
    line-height: 18px;
}
.text small {
    font-size: 10px;
    color: #555;
}
.trimmed {
    display: flex;
    align-items: center;
    justify-content: center;
    gap: 2px;
    width: 22px;
    height: 10px;
    margin-top: 13px;
    background: #ddd;
    border: 1px solid #ccc;
}
.trimmed i {
    width: 2px;
    height: 2px;
    background: #222;
}
.quoted {
    margin-top: 20px;
    color: #500050;
}
.wrote {
    padding-top: 20px;
}
.wrote a {
    color: #15c;
    text-decoration: underline;
}
blockquote {
    margin: 0 0 0 5px;
    padding-left: 7px;
    border-left: 1px solid #ccc;
}
.meta {
    display: flex;
    align-items: center;
    gap: 6px;
    margin-top: 6px;
}
.reply {
    width: 50px;
}
.drop {
    width: 23px;
}
.answer {
    display: flex;
    padding-left: 9px;
    margin-right: 5px;
}
.answer textarea {
    flex: 1;
    height: 90px;
    margin-top: 12px;
    border: 1px solid #bbb;
    resize: none;
}

/* contact */
.contact {
    flex: 0 0 220px;
    height: 108px;
    margin-right: 19px;
    padding: 10px 10px 0;
    border-bottom: 1px solid #d8d8d8;
}
.contact h2 {
    font-size: 16px;
    line-height: 24px;
}
.circles {
    display: block;
    height: 18px;
    margin-top: 3px;
    padding: 0 8px;
    background: linear-gradient(#f5f5f5, #f1f1f1);
    border: 1px solid #d0d0d0;
    border-radius: 2px;
    font-size: 11px;
    font-weight: bold;
    color: #444;
}
.contact-icons {
    display: flex;
    align-items: center;
    gap: 12px;
    margin: 12px 4px 11px;
}
.contact a {
    display: block;
    text-align: center;
    font-size: 11px;
    line-height: 13px;
}
.scrollbar {
    flex: 0 0 11px;
}
.thumb {
    height: 374px;
    background: #cbcbcb;
    border: 1px solid #b5b5b5;
    border-right: 0;
}
```
